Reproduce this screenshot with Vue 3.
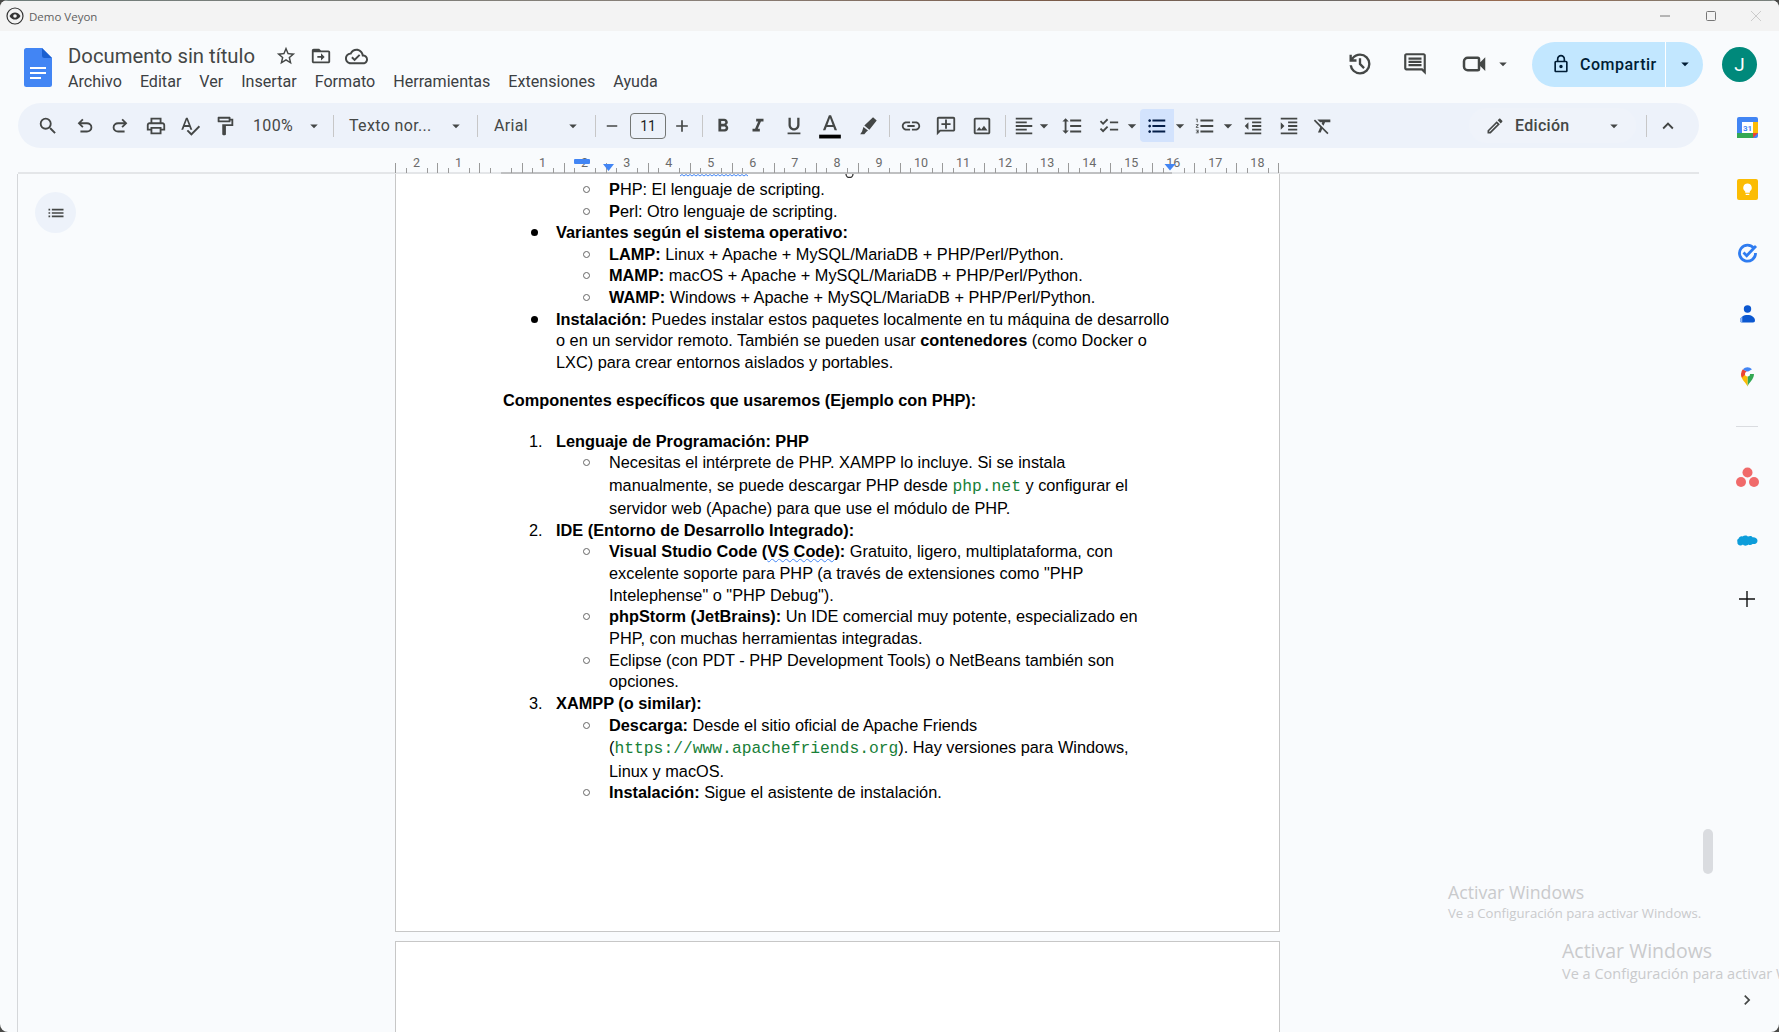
<template>
  <div class="window">
    <div class="wallstrip"></div>
    <div class="titlebar">
      <svg class="veyon" viewBox="0 0 18 18" width="18" height="18">
        <circle cx="9" cy="9" r="8" fill="none" stroke="#333" stroke-width="1.2" />
        <path d="M3.5 9C5 6.4 7 5.4 9 5.4s4 1 5.5 3.6C13 11.6 11 12.6 9 12.6S5 11.6 3.5 9z" fill="#333" />
        <circle cx="9" cy="9" r="1.8" fill="#f3f3f3" />
      </svg>
      <span class="wintitle">Demo Veyon</span>
      <div class="winctl">
        <button class="wbtn"><svg width="12" height="12" viewBox="0 0 12 12"><path d="M1 6h10" stroke="#777" /></svg></button>
        <button class="wbtn"><svg width="12" height="12" viewBox="0 0 12 12"><rect x="1.5" y="1.5" width="9" height="9" rx="1" fill="none" stroke="#777" /></svg></button>
        <button class="wbtn"><svg width="12" height="12" viewBox="0 0 12 12"><path d="M1 1l10 10M11 1L1 11" stroke="#ccc" /></svg></button>
      </div>
    </div>

    <header class="header">
      <svg class="docslogo" viewBox="0 0 28 39" width="28" height="39">
        <path d="M2.5 0H18l10 10v26.500a2.500 2.500 0 0 1-2.500 2.500h-23A2.500 2.500 0 0 1 0 36.500v-34A2.500 2.500 0 0 1 2.500 0z" fill="#4285f4" />
        <path d="M18 0l10 10h-7.500A2.500 2.500 0 0 1 18 7.500z" fill="#a1c2fa" />
        <path d="M6 19h16v2H6zm0 5h16v2H6zm0 5h11v2H6z" fill="#fff" />
      </svg>
      <div class="titlecol">
        <div class="titlerow">
          <span class="doctitle">Documento sin título</span>
          <svg class="star" viewBox="0 0 24 24" width="22" height="22"><path :d="ic.star" /></svg>
          <svg class="move" viewBox="0 0 24 24" width="22" height="22"><path :d="ic.move" /></svg>
          <svg class="cloud" viewBox="0 0 24 24" width="23" height="23"><path :d="ic.cloud" /></svg>
        </div>
        <nav class="menu">
          <span v-for="m in menus" :key="m">{{ m }}</span>
        </nav>
      </div>
      <div class="actions">
        <svg class="hist" viewBox="0 0 24 24" width="28" height="28"><path :d="ic.history" /></svg>
        <svg class="cmt" viewBox="0 0 24 24" width="26" height="26"><path :d="ic.comment" /></svg>
        <svg class="vid" viewBox="0 0 24 24" width="30" height="30"><path :d="ic.video" /></svg>
        <svg class="vidcaret" viewBox="0 0 24 24" width="18" height="18"><path :d="ic.caret" /></svg>
        <div class="share">
          <div class="share-main">
            <svg viewBox="0 0 24 24" width="20" height="20"><path :d="ic.lock" /></svg>
            <span>Compartir</span>
          </div>
          <div class="share-more">
            <svg viewBox="0 0 24 24" width="18" height="18"><path :d="ic.caret" /></svg>
          </div>
        </div>
        <div class="avatar">J</div>
      </div>
    </header>

    <div class="work">
      <div class="main">
        <div class="toolbar">
          <template v-for="(it, i) in tools" :key="i">
            <div v-if="it.sep" class="tsep" :style="{ width: it.w + 'px' }"><i></i></div>
            <div v-else-if="it.text" class="ttext" :style="{ width: it.w + 'px', paddingLeft: it.pad + 'px' }">
              <span>{{ it.text }}</span>
              <svg class="caret" viewBox="0 0 24 24" width="18" height="18" :style="{ right: it.cr + 'px' }"><path :d="ic.caret" /></svg>
            </div>
            <div v-else-if="it.box" class="tboxwrap" :style="{ width: it.w + 'px' }"><div class="tbox">11</div></div>
            <div v-else class="tbtn" :class="{ on: it.on }" :style="{ width: it.w + 'px' }">
              <svg viewBox="0 0 24 24" :width="it.s || 22" :height="it.s || 22" :class="{ flip: it.flip }">
                <path :d="ic[it.i]" />
                <rect v-if="it.i === 'textcolor'" x="2" y="20" width="20" height="3.500" fill="#000" />
              </svg>
            </div>
          </template>
          <div class="tright">
            <div class="mode">
              <svg viewBox="0 0 24 24" width="20" height="20"><path :d="ic.pencil" /></svg>
              <span>Edición</span>
              <svg class="modecaret" viewBox="0 0 24 24" width="18" height="18"><path :d="ic.caret" /></svg>
            </div>
            <div class="tsep rsep"><i></i></div>
            <div class="tbtn upbtn"><svg viewBox="0 0 24 24" width="22" height="22"><path :d="ic.up" /></svg></div>
          </div>
        </div>

        <svg class="ruler" width="1681" height="26" viewBox="0 0 1681 26">
          <path d="M0 25h1681" stroke="#cfd1d4" />
          <path d="M483 25h671" stroke="#9a9a9a" />
          <path v-for="(t, i) in ticks" :key="i" :d="t" stroke="#9a9a9a" />
          <text v-for="l in rulerLabels" :key="l.n + '-' + l.x" :x="l.x" y="19" class="rlabel" text-anchor="middle">{{ l.n }}</text>
          <rect x="556" y="11" width="16" height="5" rx="1" fill="#4285f4" />
          <path d="M585 16h11l-5.500 7z" fill="#4285f4" />
          <path d="M1146.500 16h11l-5.500 6.500z" fill="#4285f4" />
        </svg>

        <div class="body">
          <div class="outline">
            <svg viewBox="0 0 24 24" width="20" height="20"><path :d="ic.list" /></svg>
          </div>
          <div class="pages">
            <div class="page first">
              <svg class="cut" width="200" height="4" viewBox="0 0 200 4">
                <path d="M0 2l2-1.500 2 1.500 2-1.500 2 1.500 2-1.500 2 1.500 2-1.500 2 1.500 2-1.500 2 1.500 2-1.500 2 1.500 2-1.500 2 1.500 2-1.500 2 1.500 2-1.500 2 1.500 2-1.500 2 1.500 2-1.500 2 1.500 2-1.500 2 1.500 2-1.500 2 1.500 2-1.500 2 1.500 2-1.500 2 1.500 2-1.500 2 1.500 2-1.500 2 1.500" fill="none" stroke="#4285f4" />
                <path d="M166 0a3.500 3.500 0 0 0 7 0" fill="none" stroke="#333" stroke-width="1.300" />
              </svg>
              <div v-for="(r, i) in rows" :key="i" class="line" :class="['lv' + r.lv, r.cls]">
                <span v-if="r.mark === 'dot'" class="marker"><i class="dot"></i></span>
                <span v-else-if="r.mark === 'ring'" class="marker"><i class="ring"></i></span>
                <span v-else-if="r.mark" class="marker num">{{ r.mark }}</span>
                <span v-else-if="r.lv" class="marker"></span>
                <span class="linetext"><span v-for="(s, j) in r.t" :key="j" :class="s[0]">{{ s[1] }}</span></span>
              </div>
            </div>
            <div class="page second"></div>
          </div>
        </div>
      </div>

      <aside class="side">
        <svg viewBox="0 0 21 21" width="21" height="21">
          <rect width="21" height="21" rx="2" fill="#4285f4" />
          <rect x="16" y="5" width="5" height="11" fill="#fbbc04" />
          <rect y="16" width="16" height="5" fill="#34a853" />
          <path d="M16 16h5l-5 5z" fill="#ea4335" />
          <rect x="5" y="5" width="11" height="11" fill="#fff" />
          <text x="10.500" y="13.500" class="cal">31</text>
        </svg>
        <svg viewBox="0 0 21 21" width="21" height="21">
          <rect width="21" height="21" rx="2" fill="#fbbc04" />
          <path d="M10.500 4.500a4.300 4.300 0 0 0-2.300 7.900v1.300h4.600v-1.300a4.300 4.300 0 0 0-2.300-7.900zM8.700 14.800h3.600v1.100H8.700z" fill="#fff" />
        </svg>
        <svg viewBox="0 0 21 21" width="21" height="21">
          <path d="M17 6.500A8 8 0 1 0 18.500 11" fill="none" stroke="#2f7cf0" stroke-width="2.800" />
          <path d="M6.500 10.500l3.200 3.200L19 4" fill="none" stroke="#2f7cf0" stroke-width="2.800" />
        </svg>
        <svg viewBox="0 0 21 21" width="21" height="21">
          <circle cx="10.500" cy="5" r="3.700" fill="#0b57d0" />
          <path d="M5 18.500h11a2 2 0 0 0 2-2.200c-.3-3.300-3.500-5.300-7.500-5.300S3.300 13 3 16.300a2 2 0 0 0 2 2.200z" fill="#0b57d0" />
          <path d="M3 16.300c.1-1.500.9-2.900 2.300-3.800v6H5a2 2 0 0 1-2-2.200z" fill="#8ab4f8" />
        </svg>
        <svg viewBox="0 0 21 21" width="21" height="21">
          <path d="M10.500 20.500c1-3.500 6.500-7 6.500-12.500H10.500z" fill="#34a853" />
          <path d="M10.500 20.500C9.500 17 4 14 4 8h6.500z" fill="#fbbc04" />
          <path d="M5.900 3.200A6.500 6.500 0 0 0 4 8c0 1.500.4 2.700 1 3.800L10.500 6z" fill="#ea4335" />
          <path d="M5.900 3.200A6.500 6.500 0 0 1 15 3.200L10.500 6z" fill="#4285f4" />
          <circle cx="10.500" cy="8" r="2.500" fill="#fff" />
        </svg>
        <i class="sidesep"></i>
        <svg viewBox="0 0 23 21" width="23" height="21">
          <circle cx="11.500" cy="5.500" r="5" fill="#f06a6a" />
          <circle cx="5" cy="15" r="5" fill="#f06a6a" />
          <circle cx="18" cy="15" r="5" fill="#f06a6a" />
        </svg>
        <svg viewBox="0 0 21 21" width="21" height="21">
          <path d="M3.500 16.500C1 16.500 0 14.500.5 13c-.6-1.200-.3-2.800 1-3.300C2 8 4 6.700 5.500 7.500 7 6 10 6 11 7.500c2-1 4-.5 4.500.8 2.500-.3 5 1 5 3.400 0 2.600-2.600 3.800-5 3.300-1 1.200-3 1.300-4 .5-1.500 1.500-5 1.500-5.500 0-1 .7-2 1-2.500 1z" fill="#0d9dda" />
        </svg>
        <svg viewBox="0 0 16 16" width="16" height="16"><path d="M8 0v16M0 8h16" stroke="#111" stroke-width="1.400" /></svg>
      </aside>
    </div>

    <!-- elementos encima del contenido -->
    <div class="scrollthumb"></div>
    <div class="wm wm1"><b>Activar Windows</b><span>Ve a Configuración para activar Windows.</span></div>
    <div class="wm wm2"><b>Activar Windows</b><span>Ve a Configuración para activar Windows.</span></div>
    <svg class="sidechev" viewBox="0 0 24 24" width="20" height="20"><path :d="ic.right" /></svg>
  </div>
</template>

<script setup>
const menus = ['Archivo', 'Editar', 'Ver', 'Insertar', 'Formato', 'Herramientas', 'Extensiones', 'Ayuda']

const ic = {
  caret: 'M7 10l5 5 5-5z',
  up: 'M12 8l-6 6 1.41 1.41L12 10.83l4.59 4.58L18 14z',
  right: 'M10 6L8.590 7.410 13.170 12l-4.580 4.590L10 18l6-6z',
  star: 'M22 9.240l-7.190-.620L12 2 9.190 8.630 2 9.240l5.460 4.730L5.820 21 12 17.270 18.180 21l-1.630-7.030L22 9.240zM12 15.400l-3.760 2.270 1-4.280-3.320-2.880 4.380-.380L12 6.100l1.710 4.040 4.380.380-3.320 2.880 1 4.280L12 15.400z',
  move: 'M20 6h-8l-2-2H4c-1.100 0-2 .9-2 2v12c0 1.100.9 2 2 2h16c1.100 0 2-.9 2-2V8c0-1.100-.9-2-2-2zm0 12H4V8h16v10zm-8-1l4-4-4-4v3H8v2h4z',
  cloud: 'M19.350 10.040C18.670 6.590 15.640 4 12 4 9.110 4 6.600 5.640 5.350 8.040 2.340 8.360 0 10.910 0 14c0 3.310 2.690 6 6 6h13c2.760 0 5-2.240 5-5 0-2.640-2.050-4.780-4.650-4.960zM19 18H6c-2.210 0-4-1.790-4-4 0-2.050 1.530-3.760 3.560-3.970l1.070-.11.5-.95C8.080 7.140 9.940 6 12 6c2.620 0 4.880 1.860 5.390 4.430l.3 1.500 1.530.11c1.560.1 2.780 1.410 2.780 2.960 0 1.650-1.350 3-3 3zm-9-3.820l-2.090-2.090L6.500 13.500 10 17l6.010-6.010-1.410-1.410z',
  history: 'M12 21q-3.450 0-6.012-2.288T3.050 13H5.100q.35 2.600 2.313 4.300T12 19q2.925 0 4.963-2.038T19 12q0-2.925-2.037-4.963T12 5q-1.725 0-3.225.8T6.250 8H9v2H3V4h2v2.350q1.275-1.600 3.113-2.475T12 3q3.750 0 6.375 2.625T21 12q0 3.750-2.625 6.375T12 21zm2.800-4.800L11 12.400V7h2v4.600l3.200 3.200-1.400 1.400z',
  comment: 'M21.990 4c0-1.100-.89-2-1.990-2H4c-1.100 0-2 .9-2 2v12c0 1.100.9 2 2 2h14l4 4-.01-18zM20 4v13.170L18.830 16H4V4h16zM6 12h12v2H6zm0-3h12v2H6zm0-3h12v2H6z',
  video: 'M17 10.500V8a2 2 0 0 0-2-2H7a4 4 0 0 0-4 4v4a4 4 0 0 0 4 4h8a2 2 0 0 0 2-2v-2.500l4 4v-11l-4 4zM15 16H7a2 2 0 0 1-2-2v-4a2 2 0 0 1 2-2h8v8z',
  lock: 'M18 8h-1V6c0-2.760-2.240-5-5-5S7 3.240 7 6v2H6c-1.100 0-2 .9-2 2v10c0 1.100.9 2 2 2h12c1.100 0 2-.9 2-2V10c0-1.100-.9-2-2-2zM9 6c0-1.660 1.340-3 3-3s3 1.340 3 3v2H9V6zm9 14H6V10h12v10zm-6-3c1.100 0 2-.9 2-2s-.9-2-2-2-2 .9-2 2 .9 2 2 2z',
  search: 'M15.500 14h-.79l-.28-.27A6.471 6.471 0 0 0 16 9.500 6.500 6.500 0 1 0 9.500 16c1.610 0 3.090-.59 4.230-1.570l.27.28v.79l5 4.990L20.490 19l-4.990-5zm-6 0C7.010 14 5 11.990 5 9.500S7.010 5 9.500 5 14 7.010 14 9.500 11.990 14 9.500 14z',
  undo: 'M7 19v-2h7.100q1.575 0 2.738-1T18 13.500q0-1.500-1.162-2.500T14.100 10H7.800l2.600 2.600L9 14 4 9l5-5 1.400 1.400L7.800 8h6.300q2.425 0 4.163 1.575T20 13.500q0 2.350-1.737 3.925T14.100 19H7z',
  print: 'M19 8h-1V3H6v5H5c-1.660 0-3 1.340-3 3v6h4v4h12v-4h4v-6c0-1.660-1.340-3-3-3zM8 5h8v3H8V5zm8 12v2H8v-4h8v2zm2-2v-2H6v2H4v-4c0-.55.45-1 1-1h14c.55 0 1 .45 1 1v4h-2z',
  spell: 'M12.450 16h2.090L9.430 3H7.570L2.460 16h2.090l1.120-3h5.640l1.140 3zm-6.020-5L8.500 5.480 10.570 11H6.430zm15.160.59l-8.090 8.090L9.830 16l-1.410 1.410 5.090 5.090L23 13l-1.410-1.410z',
  paint: 'M18 4V3c0-.55-.45-1-1-1H5c-.55 0-1 .45-1 1v4c0 .55.45 1 1 1h12c.55 0 1-.45 1-1V6h1v4H9v11c0 .55.45 1 1 1h2c.55 0 1-.45 1-1v-9h8V4h-3zm-2 2H6V4h10v2zm-5 6v8h0v-8z',
  minus: 'M5 11h14v2H5z',
  plus: 'M19 13h-6v6h-2v-6H5v-2h6V5h2v6h6v2z',
  bold: 'M15.600 10.790c.97-.67 1.650-1.770 1.650-2.790 0-2.260-1.750-4-4-4H7v14h7.040c2.090 0 3.710-1.700 3.710-3.790 0-1.520-.86-2.820-2.150-3.420zM10 6.500h3c.83 0 1.500.67 1.500 1.500s-.67 1.500-1.500 1.500h-3v-3zm3.500 9H10v-3h3.500c.83 0 1.500.67 1.500 1.500s-.67 1.500-1.500 1.500z',
  italic: 'M10 4v3h2.210l-3.420 8H6v3h8v-3h-2.210l3.420-8H18V4z',
  underline: 'M12 17c3.310 0 6-2.690 6-6V3h-2.500v8c0 1.930-1.570 3.500-3.500 3.500S8.500 12.930 8.500 11V3H6v8c0 3.310 2.690 6 6 6zm-7 2v2h14v-2H5z',
  textcolor: 'M11 2L5.500 16h2.250l1.120-3h6.250l1.120 3h2.250L13 2h-2zm-1.380 9L12 4.670 14.380 11H9.620z',
  highlight: 'M17.500 2.500l4 3.500-8 10-5.500-4.500zM7 13l5 4-2 1.500-2 2.500H3.500l2-3z',
  link: 'M3.900 12c0-1.710 1.390-3.100 3.100-3.100h4V7H7c-2.760 0-5 2.240-5 5s2.240 5 5 5h4v-1.900H7c-1.710 0-3.100-1.390-3.100-3.100zM8 13h8v-2H8v2zm9-6h-4v1.900h4c1.710 0 3.100 1.390 3.100 3.100s-1.390 3.100-3.100 3.100h-4V17h4c2.760 0 5-2.240 5-5s-2.240-5-5-5z',
  addcomment: 'M20 2H4c-1.100 0-2 .9-2 2v18l4-4h14c1.100 0 2-.9 2-2V4c0-1.100-.9-2-2-2zm0 14H5.170L4 17.170V4h16v12zM11 5h2v4h4v2h-4v4h-2v-4H7V9h4z',
  image: 'M19 5v14H5V5h14m0-2H5c-1.100 0-2 .9-2 2v14c0 1.100.9 2 2 2h14c1.100 0 2-.9 2-2V5c0-1.100-.9-2-2-2zm-4.860 8.860l-3 3.870L9 13.140 6 17h12l-3.860-5.140z',
  align: 'M15 15H3v2h12v-2zm0-8H3v2h12V7zM3 13h18v-2H3v2zm0 8h18v-2H3v2zM3 3v2h18V3H3z',
  spacing: 'M6 7h2.500L5 3.500 1.500 7H4v10H1.500L5 20.500 8.500 17H6V7zm4-2v2h12V5H10zm0 14h12v-2H10v2zm0-6h12v-2H10v2z',
  check: 'M22 7h-9v2h9V7zm0 8h-9v2h9v-2zM5.540 11L2 7.460l1.410-1.410 2.120 2.120 4.240-4.240 1.410 1.410L5.540 11zm0 8L2 15.460l1.410-1.410 2.120 2.120 4.240-4.240 1.410 1.410L5.540 19z',
  bullets: 'M4 10.500c-.83 0-1.500.67-1.500 1.500s.67 1.500 1.500 1.500 1.500-.67 1.500-1.500-.67-1.500-1.500-1.500zm0-6c-.83 0-1.500.67-1.500 1.500S3.170 7.500 4 7.500 5.500 6.830 5.500 6 4.830 4.500 4 4.500zm0 12c-.83 0-1.500.68-1.500 1.500s.68 1.500 1.500 1.500 1.500-.68 1.500-1.500-.67-1.500-1.500-1.500zM7 19h14v-2H7v2zm0-6h14v-2H7v2zm0-8v2h14V5H7z',
  numbers: 'M2 17h2v.5H3v1h1v.5H2v1h3v-4H2v1zm1-9h1V4H2v1h1v3zm-1 3h1.800L2 13.100v.9h3v-1H3.200L5 10.900V10H2v1zm5-6v2h14V5H7zm0 14h14v-2H7v2zm0-6h14v-2H7v2z',
  outdent: 'M11 17h10v-2H11v2zm-8-5l4 4V8l-4 4zm0 9h18v-2H3v2zM3 3v2h18V3H3zm8 6h10V7H11v2zm0 4h10v-2H11v2z',
  indent: 'M3 21h18v-2H3v2zM3 8v8l4-4-4-4zm8 9h10v-2H11v2zM3 3v2h18V3H3zm8 6h10V7H11v2zm0 4h10v-2H11v2z',
  clear: 'M3.270 5L2 6.270l6.970 6.970L6.500 19h3l1.570-3.660L16.730 21 18 19.730 3.550 5.270 3.270 5zM6 5v.18L8.820 8h2.400l-.72 1.680 2.100 2.100L14.210 8H20V5H6z',
  pencil: 'M3 17.250V21h3.750L17.810 9.940l-3.750-3.750L3 17.250zM5.920 19H5v-.92l9.060-9.060.92.92L5.920 19zM20.710 5.630l-2.340-2.340c-.2-.2-.45-.29-.71-.29s-.51.1-.7.29l-1.830 1.830 3.750 3.750 1.830-1.830c.39-.39.39-1.020 0-1.410z',
  list: 'M3 13h2v-2H3v2zm0 4h2v-2H3v2zm0-8h2V7H3v2zm4 4h14v-2H7v2zm0 4h14v-2H7v2zM7 7v2h14V7H7z',
}

const tools = [
  { i: 'search', w: 36 },
  { i: 'undo', w: 38 },
  { i: 'undo', w: 32, flip: true },
  { i: 'print', w: 40 },
  { i: 'spell', w: 28 },
  { i: 'paint', w: 42 },
  { text: '100%', w: 84, pad: 7, cr: 7 },
  { sep: true, w: 6 },
  { text: 'Texto nor...', w: 138, pad: 13, cr: 9 },
  { sep: true, w: 6 },
  { text: 'Arial', w: 112, pad: 14, cr: 10 },
  { sep: true, w: 6 },
  { i: 'minus', w: 28, s: 18 },
  { box: true, w: 44 },
  { i: 'plus', w: 24, s: 20 },
  { sep: true, w: 16 },
  { i: 'bold', w: 26 },
  { i: 'italic', w: 44 },
  { i: 'underline', w: 28 },
  { i: 'textcolor', w: 44, s: 26 },
  { i: 'highlight', w: 32 },
  { sep: true, w: 10 },
  { i: 'link', w: 34 },
  { i: 'addcomment', w: 36 },
  { i: 'image', w: 36 },
  { sep: true, w: 10 },
  { i: 'align', w: 28 },
  { i: 'caret', w: 12, s: 20 },
  { i: 'spacing', w: 44 },
  { i: 'check', w: 30 },
  { i: 'caret', w: 16, s: 20 },
  { i: 'bullets', w: 34, on: true },
  { i: 'caret', w: 12, s: 20 },
  { i: 'numbers', w: 38 },
  { i: 'caret', w: 8, s: 20 },
  { i: 'outdent', w: 42 },
  { i: 'indent', w: 30 },
  { i: 'clear', w: 38 },
]

// regla: cada cm son 42.05px, el cero cae en el margen del texto
const CM = 42.05
const ZERO = 482.5
const rulerLabels = []
for (let n = -2; n <= 18; n++) {
  if (n !== 0) rulerLabels.push({ n: Math.abs(n), x: ZERO + n * CM })
}
const ticks = []
for (let q = -10; q <= 74; q++) {
  if (q === 0 || q % 4 === 0) continue
  const x = Math.round(ZERO + (q * CM) / 4) + 0.5
  if (x < 377 || x > 1262) continue
  ticks.push(`M${x} 25V${q % 2 === 0 ? 15 : 20}`)
}

const rows = [
  { lv: 2, mark: 'ring', t: [['b', 'P'], ['', 'HP: El lenguaje de scripting.']] },
  { lv: 2, mark: 'ring', t: [['b', 'P'], ['', 'erl: Otro lenguaje de scripting.']] },
  { lv: 1, mark: 'dot', t: [['b', 'Variantes según el sistema operativo:']] },
  { lv: 2, mark: 'ring', t: [['b', 'LAMP:'], ['', ' Linux + Apache + MySQL/MariaDB + PHP/Perl/Python.']] },
  { lv: 2, mark: 'ring', t: [['b', 'MAMP:'], ['', ' macOS + Apache + MySQL/MariaDB + PHP/Perl/Python.']] },
  { lv: 2, mark: 'ring', t: [['b', 'WAMP:'], ['', ' Windows + Apache + MySQL/MariaDB + PHP/Perl/Python.']] },
  { lv: 1, mark: 'dot', t: [['b', 'Instalación:'], ['', ' Puedes instalar estos paquetes localmente en tu máquina de desarrollo']] },
  { lv: 1, t: [['', 'o en un servidor remoto. También se pueden usar '], ['b', 'contenedores'], ['', ' (como Docker o']] },
  { lv: 1, t: [['', 'LXC) para crear entornos aislados y portables.']] },
  { lv: 0, cls: 'gap-a', t: [['b', 'Componentes específicos que usaremos (Ejemplo con PHP):']] },
  { lv: 1, cls: 'gap-b', mark: '1.', t: [['b', 'Lenguaje de Programación: PHP']] },
  { lv: 2, mark: 'ring', t: [['', 'Necesitas el intérprete de PHP. XAMPP lo incluye. Si se instala']] },
  { lv: 2, cls: 'tall', t: [['', 'manualmente, se puede descargar PHP desde '], ['mono', 'php.net'], ['', ' y configurar el']] },
  { lv: 2, t: [['', 'servidor web (Apache) para que use el módulo de PHP.']] },
  { lv: 1, mark: '2.', t: [['b', 'IDE (Entorno de Desarrollo Integrado):']] },
  { lv: 2, mark: 'ring', t: [['b', 'Visual Studio Code ('], ['b wavy', 'VS Code'], ['b', '):'], ['', ' Gratuito, ligero, multiplataforma, con']] },
  { lv: 2, t: [['', 'excelente soporte para PHP (a través de extensiones como "PHP']] },
  { lv: 2, t: [['', 'Intelephense" o "PHP Debug").']] },
  { lv: 2, mark: 'ring', t: [['b', 'phpStorm (JetBrains):'], ['', ' Un IDE comercial muy potente, especializado en']] },
  { lv: 2, t: [['', 'PHP, con muchas herramientas integradas.']] },
  { lv: 2, mark: 'ring', t: [['', 'Eclipse (con PDT - PHP Development Tools) o NetBeans también son']] },
  { lv: 2, t: [['', 'opciones.']] },
  { lv: 1, mark: '3.', t: [['b', 'XAMPP (o similar):']] },
  { lv: 2, mark: 'ring', t: [['b', 'Descarga:'], ['', ' Desde el sitio oficial de Apache Friends']] },
  { lv: 2, cls: 'tall', t: [['', '('], ['mono', 'https://www.apachefriends.org'], ['', '). Hay versiones para Windows,']] },
  { lv: 2, t: [['', 'Linux y macOS.']] },
  { lv: 2, mark: 'ring', t: [['b', 'Instalación:'], ['', ' Sigue el asistente de instalación.']] },
]
</script>

<style>
html, body {
  margin: 0;
  height: 100%;
  overflow: hidden;
  background: #4a4a48;
}
</style>

<style scoped>
.window {
  position: relative;
  width: 1779px;
  height: 1032px;
  overflow: hidden;
  border-radius: 8px;
  background: #f9fbfd;
  font-family: Roboto, "Open Sans", sans-serif;
  color: #444746;
}
svg { flex-shrink: 0; }
svg path { fill: #444746; }
.wallstrip {
  height: 1px;
  background: linear-gradient(90deg, #6f7d7b 0%, #8a8078 40%, #7a5a48 60%, #6f6a66 75%, #9a6a4e 85%, #77827f 100%);
}
.titlebar {
  height: 30px;
  background: #f3f3f3;
  display: flex;
  align-items: center;
  padding-left: 6px;
}
.veyon { margin-right: 5px; }
.veyon path { fill: #333; }
.wintitle {
  font-family: "Open Sans", sans-serif;
  font-size: 11.500px;
  color: #5f5f5f;
}
.winctl { margin-left: auto; display: flex; }
.wbtn {
  width: 45.500px;
  height: 30px;
  border: 0;
  padding: 0;
  background: none;
  display: flex;
  align-items: center;
  justify-content: center;
}
.wbtn path { fill: none; }

.header {
  height: 72px;
  display: flex;
  padding-left: 24px;
  padding-right: 22px;
}
.docslogo { margin-top: 17px; margin-right: 16px; }
.docslogo path:nth-child(1) { fill: #4285f4; }
.docslogo path:nth-child(2) { fill: #1a5fd0; }
.docslogo path:nth-child(3) { fill: #fff; }
.titlecol { display: flex; flex-direction: column; }
.titlerow { display: flex; align-items: center; height: 30px; margin-top: 10px; }
.doctitle { font-size: 20.300px; color: #444746; width: 186px; white-space: nowrap; }
.star { margin-left: 21px; }
.move { margin-left: 13px; }
.cloud { margin-left: 13px; }
.menu {
  display: flex;
  gap: 18px;
  font-size: 16.100px;
  line-height: 22px;
  color: #3c4043;
  white-space: nowrap;
}
.actions { margin-left: auto; display: flex; align-items: center; padding-bottom: 6px; }
.hist { margin-right: 28px; }
.cmt { margin-right: 31px; }
.vidcaret { margin: 0 20px 0 5px; }
.share {
  width: 171px;
  height: 45px;
  display: flex;
  border-radius: 23px;
  overflow: hidden;
  background: #c2e7ff;
  margin-right: 19px;
}
.share path { fill: #001d35; }
.share-main {
  width: 134px;
  display: flex;
  align-items: center;
  gap: 9px;
  padding-left: 19px;
  box-sizing: border-box;
  color: #001d35;
  font-size: 16px;
  font-weight: 500;
  letter-spacing: 0.5px;
  border-right: 1px solid #fff;
}
.share-more { flex: 1; display: flex; align-items: center; justify-content: center; }
.avatar {
  width: 35px;
  height: 35px;
  border-radius: 50%;
  background: #00897b;
  color: #fff;
  display: flex;
  align-items: center;
  justify-content: center;
  font-size: 19px;
}

.work { display: flex; height: 929px; }
.main { width: 1681px; margin-left: 18px; display: flex; flex-direction: column; }
.side {
  flex: 1;
  display: flex;
  flex-direction: column;
  align-items: center;
  gap: 41.300px;
  padding-top: 14px;
  padding-left: 16px;
}
.side svg path { fill: revert-layer; }
.sidesep { width: 22px; height: 1px; background: #dadce0; margin: -2px 0; flex-shrink: 0; }
.cal {
  font-family: Roboto, sans-serif;
  font-size: 8px;
  font-weight: 700;
  fill: #4285f4;
  text-anchor: middle;
}

.toolbar {
  height: 45px;
  flex-shrink: 0;
  background: #edf2fa;
  border-radius: 23px;
  display: flex;
  align-items: center;
  padding-left: 12px;
  padding-right: 16px;
  font-size: 16px;
}
.tbtn {
  height: 33px;
  flex-shrink: 0;
  display: flex;
  align-items: center;
  justify-content: center;
}
.tbtn.on { background: #d3e3fd; border-radius: 4px 0 0 4px; }
.tbtn.on path { fill: #041e49; }
.flip { transform: scaleX(-1); }
.tsep { flex-shrink: 0; display: flex; justify-content: center; align-items: center; }
.tsep i { width: 1px; height: 22px; background: #c7c7c7; display: block; }
.ttext {
  position: relative;
  box-sizing: border-box;
  flex-shrink: 0;
  height: 33px;
  display: flex;
  align-items: center;
  white-space: nowrap;
  letter-spacing: 0.35px;
}
.caret { position: absolute; top: 8px; }
.tboxwrap { flex-shrink: 0; display: flex; justify-content: center; }
.tbox {
  width: 36px;
  height: 26px;
  box-sizing: border-box;
  border: 1px solid #747775;
  border-radius: 4px;
  display: flex;
  align-items: center;
  justify-content: center;
  font-size: 14px;
  color: #1f1f1f;
}
.tright { margin-left: auto; display: flex; align-items: center; }
.mode {
  width: 167px;
  height: 35px;
  box-sizing: border-box;
  border-radius: 18px;
  background: #eff3fa;
  display: flex;
  align-items: center;
  gap: 10px;
  padding-left: 16px;
  letter-spacing: 0.3px;
  font-weight: 500;
  position: relative;
}
.modecaret { position: absolute; right: 13px; top: 9px; }
.rsep { width: 1px; margin-left: 10px; }
.upbtn { width: 30px; margin-left: 6px; }

.ruler { flex-shrink: 0; display: block; }
.ruler path[stroke] { fill: none; }
.ruler rect { fill: #4285f4; }
.ruler path:nth-last-child(-n+2) { fill: #4285f4; }
.rlabel {
  font-family: Roboto, sans-serif;
  font-size: 12.500px;
  fill: #6a6a6a;
}

.body {
  flex: 1;
  min-height: 0;
  display: flex;
  overflow: hidden;
  margin-left: -1px;
  border-left: 1px solid #d5d7da;
}
.outline {
  width: 41px;
  height: 41px;
  margin: 18px 0 0 17px;
  border-radius: 50%;
  background: #edf2fa;
  display: flex;
  align-items: center;
  justify-content: center;
  flex-shrink: 0;
}
.pages { margin-left: 319px; width: 885px; flex-shrink: 0; }
.page {
  position: relative;
  box-sizing: border-box;
  background: #fff;
  border: 1px solid #c7c7c7;
}
.page.first { height: 758px; border-top: 0; padding-top: 4.600px; }
.page.second { height: 200px; margin-top: 9px; }
.cut { position: absolute; top: 0; left: 284px; }
.cut path { fill: none; }
.cut path:first-child { stroke: #4285f4; }

.line {
  height: 21.650px;
  display: flex;
  align-items: center;
  white-space: nowrap;
  font-family: "Liberation Sans", Arial, sans-serif;
  font-size: 16.320px;
  color: #000;
}
.lv0 { padding-left: 107px; }
.lv1 { padding-left: 133px; }
.lv2 { padding-left: 187px; }
.tall { height: 24.300px; }
.gap-a { margin-top: 16.500px; }
.gap-b { margin-top: 18.800px; }
.marker { display: flex; align-items: center; flex-shrink: 0; }
.lv1 .marker { width: 27px; }
.lv2 .marker { width: 26px; }
.dot { width: 7px; height: 7px; border-radius: 50%; background: #000; margin-left: 2px; }
.ring { width: 7px; height: 7px; border-radius: 50%; border: 1px solid #666; box-sizing: border-box; }
.linetext { white-space: pre; }
.b { font-weight: 700; }
.mono { font-family: "Liberation Mono", monospace; color: #188038; }
.wavy { text-decoration: underline wavy #4285f4 1px; }

.scrollthumb {
  position: absolute;
  left: 1703px;
  top: 829px;
  width: 10px;
  height: 45px;
  border-radius: 5px;
  background: #dadce0;
}
.wm { position: absolute; font-family: "Open Sans", sans-serif; color: #c9cacc; white-space: nowrap; }
.wm b, .wm span { display: block; font-weight: 400; }
.wm1 { left: 1448px; top: 880px; }
.wm1 b { font-size: 17.700px; line-height: 25px; }
.wm1 span { font-size: 13.150px; line-height: 16px; }
.wm2 { left: 1562px; top: 937px; }
.wm2 b { font-size: 19.500px; line-height: 27px; }
.wm2 span { font-size: 14.500px; line-height: 19px; }
.sidechev { position: absolute; left: 1737px; top: 990px; }
</style>
